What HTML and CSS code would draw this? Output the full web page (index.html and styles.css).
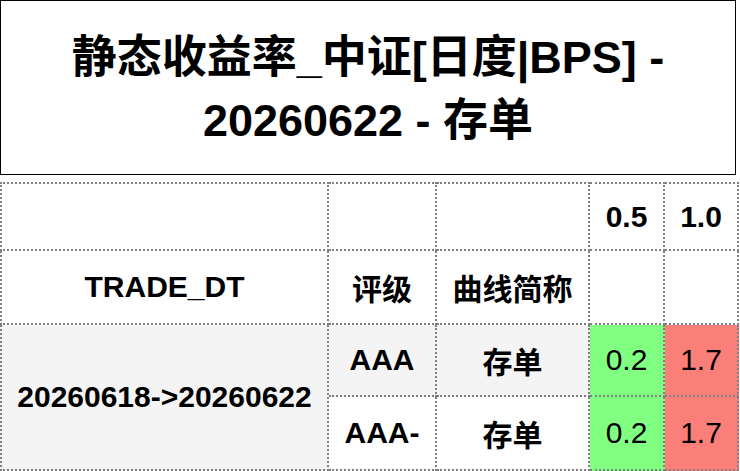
FILE: index.html
```html
<!DOCTYPE html>
<html lang="zh-CN">
<head>
<meta charset="utf-8">
<title>静态收益率</title>
<link rel="stylesheet" href="styles.css">
</head>
<body>
<div class="title">静态收益率_中证[日度|BPS] -<br>20260622 - 存单</div>
<table class="grid">
  <colgroup>
    <col class="c1"><col class="c2"><col class="c3"><col class="c4"><col class="c5">
  </colgroup>
  <thead>
    <tr class="h1"><th class="first"></th><th></th><th></th><th>0.5</th><th>1.0</th></tr>
    <tr class="h2"><th class="first">TRADE_DT</th><th>评级</th><th>曲线简称</th><th></th><th></th></tr>
  </thead>
  <tbody>
    <tr class="r1">
      <td rowspan="2" class="b shade first">20260618-&gt;20260622</td>
      <td class="b shade">AAA</td>
      <td class="b shade">存单</td>
      <td class="green">0.2</td>
      <td class="red">1.7</td>
    </tr>
    <tr class="r2">
      <td class="b">AAA-</td>
      <td class="b">存单</td>
      <td class="green">0.2</td>
      <td class="red">1.7</td>
    </tr>
  </tbody>
</table>
</body>
</html>
```

FILE: styles.css
```css
html, body {
  margin: 0;
  padding: 0;
  background: #ffffff;
}
body {
  font-family: "Liberation Sans", "Noto Sans CJK SC", sans-serif;
  color: #000;
  width: 740px;
  height: 471px;
  overflow: hidden;
}
.title {
  box-sizing: border-box;
  width: 736px;
  height: 175px;
  border: 1px solid #000;
  margin-bottom: 7px;
  display: flex;
  align-items: center;
  justify-content: center;
  text-align: center;
  font-size: 45px;
  font-weight: bold;
  line-height: 63px;
  padding-top: 2px;
}
.grid {
  border-collapse: separate;
  border-spacing: 0;
  table-layout: fixed;
  width: 739px;
  font-size: 30px;
}
.c1 { width: 329px; }
.c2 { width: 108px; }
.c3 { width: 153px; }
.c4 { width: 75px; }
.c5 { width: 74px; }
.grid th, .grid td {
  box-sizing: border-box;
  border-right: 2px dotted #808080;
  border-bottom: 2px dotted #808080;
  padding: 0;
  text-align: center;
  vertical-align: middle;
  white-space: nowrap;
  overflow: hidden;
}
.grid .h1 th { border-top: 2px dotted #808080; }
.grid .first { border-left: 2px dotted #808080; }
.grid th { font-weight: bold; }
.grid td { font-weight: normal; }
.grid td.b { font-weight: bold; }
.h1 { height: 69px; }
.h2 { height: 74px; }
.r1 { height: 72px; }
.r2 { height: 74px; }
.shade { background: #f4f4f4; }
.green { background: #80ff80; }
.red { background: #fb7f79; }
```
